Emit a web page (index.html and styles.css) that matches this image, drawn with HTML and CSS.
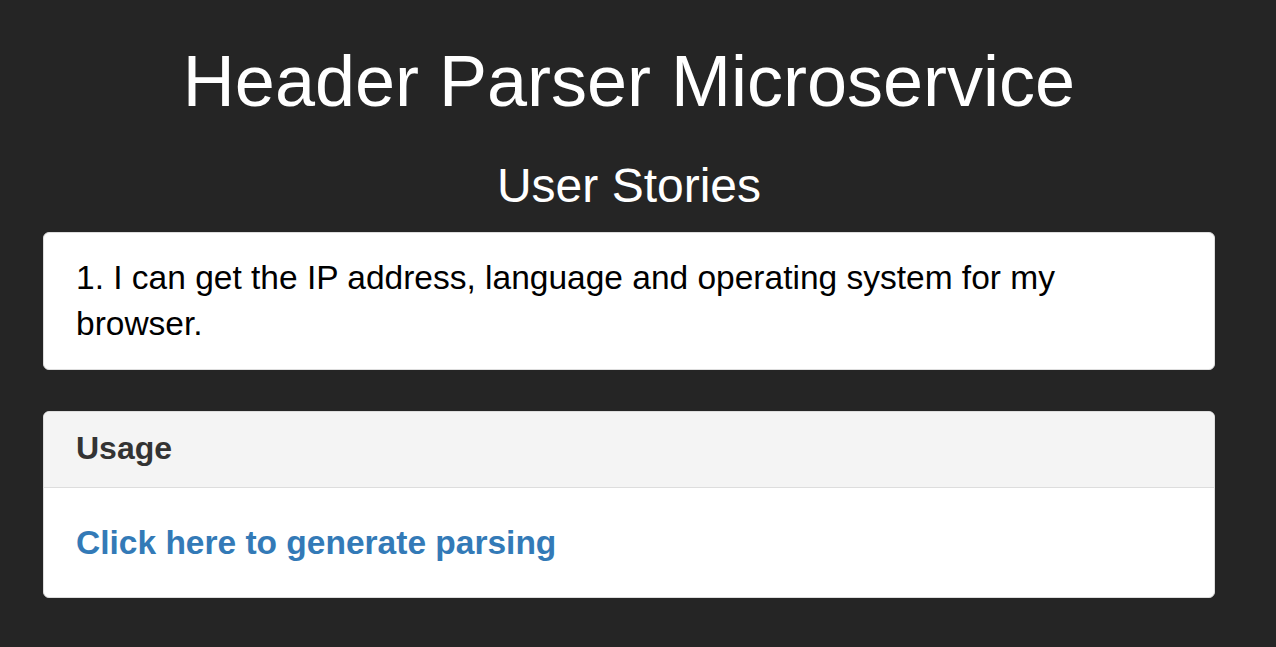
FILE: index.html
```html
<!DOCTYPE html>
<html>
<head>
<meta charset="utf-8">
<title>Header Parser Microservice</title>
<link rel="stylesheet" href="styles.css">
</head>
<body>
<div class="page">
  <h1 class="title">Header Parser Microservice</h1>
  <h2 class="subtitle">User Stories</h2>
  <div class="panel">
    <div class="panel-body story">1. I can get the IP address, language and operating system for my browser.</div>
  </div>
  <div class="panel">
    <div class="panel-heading">Usage</div>
    <div class="panel-body usage"><a class="link" href="#">Click here to generate parsing</a></div>
  </div>
</div>
</body>
</html>
```
FILE: styles.css
```css
html, body {
  margin: 0;
  padding: 0;
  background: #252525;
}
body {
  font-family: "Liberation Sans", Arial, sans-serif;
  color: #000;
}
.page {
  width: 1258px;
  box-sizing: border-box;
  padding: 0 43px;
}
.title {
  margin: 42px 0 0;
  font-size: 72px;
  font-weight: normal;
  line-height: 1.1;
  color: #fff;
  text-align: center;
}
.subtitle {
  margin: 39px 0 19px;
  font-size: 48px;
  font-weight: normal;
  line-height: 1.1;
  color: #fff;
  text-align: center;
}
.panel {
  background: #fff;
  border: 1px solid #ddd;
  border-radius: 6px;
  margin-bottom: 41px;
  overflow: hidden;
}
.panel-body {
  padding: 22px 32px;
}
.story {
  padding: 22px 44px 22px 32px;
  font-size: 33.5px;
  line-height: 46px;
  color: #000;
}
.panel-heading {
  background: #f4f4f4;
  border-bottom: 1px solid #ddd;
  padding: 19px 32px 21px;
  font-size: 32px;
  font-weight: bold;
  line-height: 1.1;
  color: #333;
}
.usage {
  padding: 32px 32px 31px;
  font-size: 33.5px;
  line-height: 46px;
  font-weight: bold;
}
.link {
  color: #337ab7;
  text-decoration: none;
}
```
